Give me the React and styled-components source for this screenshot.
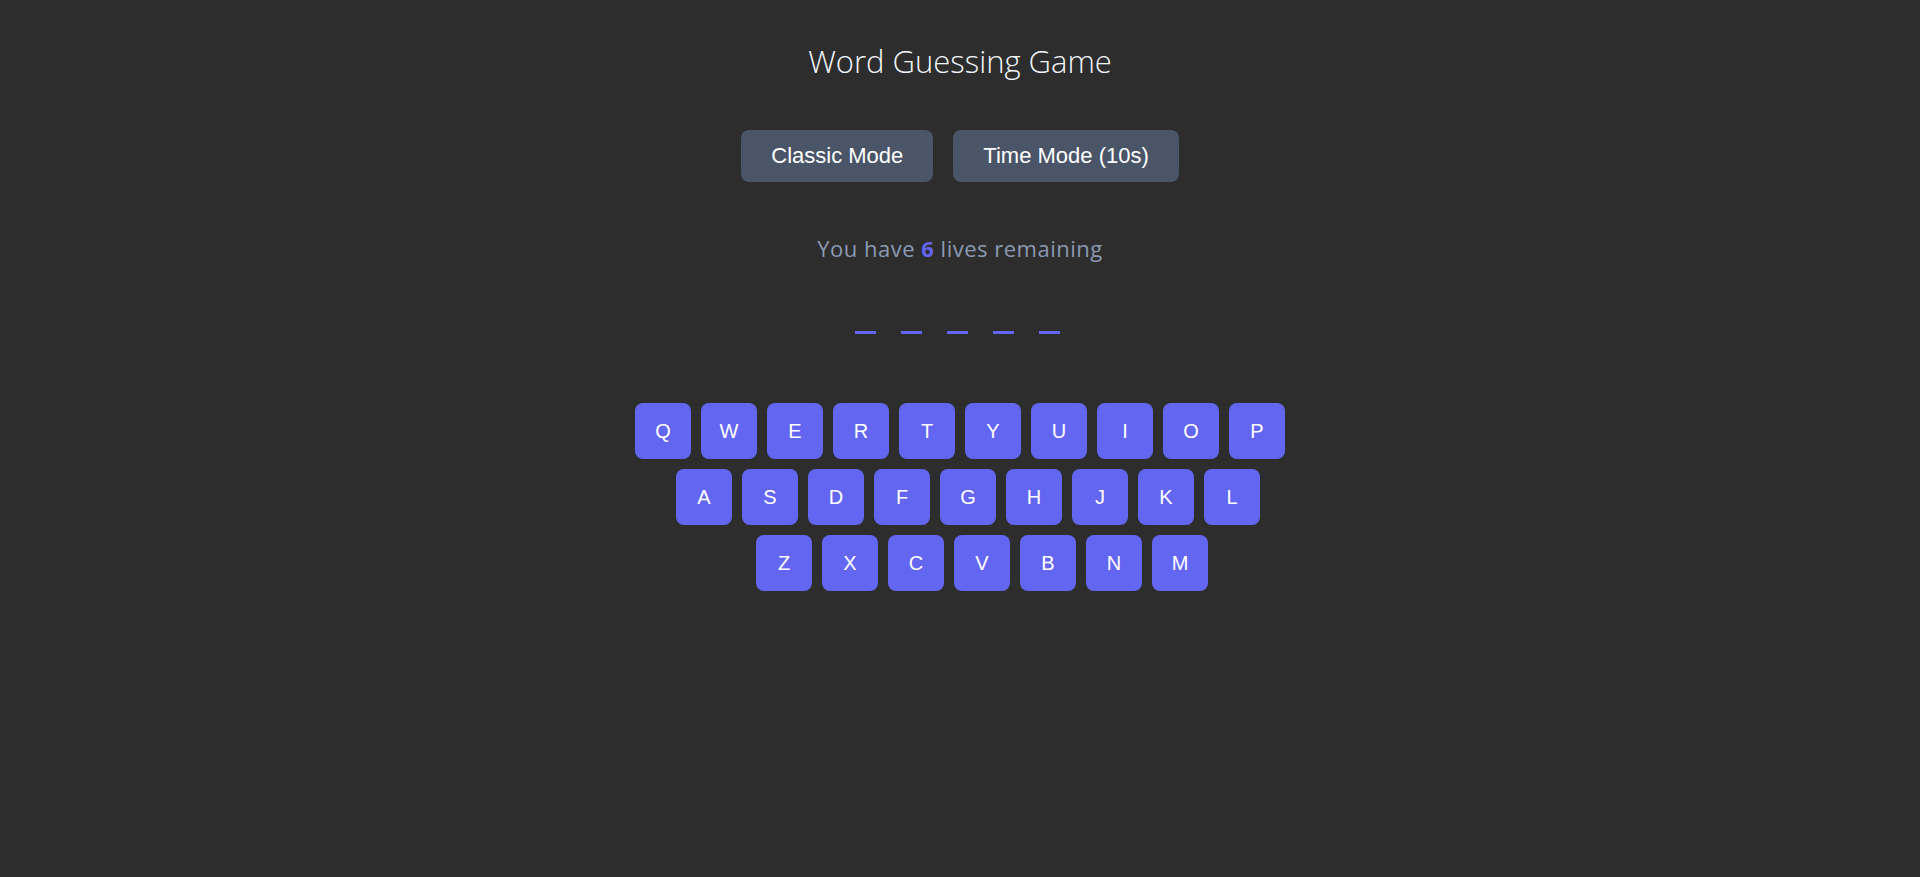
import React from 'react'
import styled, { createGlobalStyle } from 'styled-components'

const GlobalStyle = createGlobalStyle`
  body {
    margin: 0;
    background: #2d2d2d;
  }
`

const Page = styled.div`
  min-height: 100vh;
  background: #2d2d2d;
  display: flex;
  flex-direction: column;
  align-items: center;
  padding-top: 41px;
  box-sizing: border-box;
`

const Title = styled.h1`
  margin: 0;
  font-family: 'Open Sans', 'Noto Sans', sans-serif;
  font-weight: 300;
  font-size: 31px;
  line-height: 40px;
  color: #f1f5f9;
`

const ModeBar = styled.div`
  display: flex;
  gap: 20px;
  margin-top: 49px;
`

const ModeButton = styled.button`
  height: 52px;
  padding: 0 30px;
  border: none;
  border-radius: 8px;
  background: #4a5568;
  color: #ffffff;
  font-family: 'Liberation Sans', Arial, sans-serif;
  font-size: 22px;
  cursor: pointer;
`

const Lives = styled.p`
  margin: 52px 0 0;
  font-family: 'Open Sans', 'Noto Sans', sans-serif;
  font-size: 22px;
  letter-spacing: 0.5px;
  line-height: 28px;
  color: #8b9ab3;
`

const Count = styled.span`
  color: #6366f1;
  font-weight: 700;
`

const Word = styled.div`
  display: flex;
  gap: 25px;
  margin-top: 69px;
  padding-right: 5px;
`

const Blank = styled.span`
  width: 21px;
  height: 3px;
  background: #6366f1;
`

const Keyboard = styled.div`
  display: flex;
  flex-direction: column;
  align-items: center;
  gap: 10px;
  margin-top: 69px;
`

const KeyRow = styled.div`
  display: flex;
  gap: 10px;
  padding-left: ${(p) => p.$indent}px;
`

const Key = styled.button`
  width: 56px;
  height: 56px;
  padding: 0;
  border: none;
  border-radius: 8px;
  background: #6366f1;
  color: #ffffff;
  font-family: 'Liberation Sans', Arial, sans-serif;
  font-size: 20px;
  cursor: pointer;
`

const rows = [
  { keys: 'QWERTYUIOP', indent: 0 },
  { keys: 'ASDFGHJKL', indent: 16 },
  { keys: 'ZXCVBNM', indent: 44 },
]

export default function App() {
  return (
    <>
      <GlobalStyle />
      <Page>
        <Title>Word Guessing Game</Title>
        <ModeBar>
          <ModeButton>Classic Mode</ModeButton>
          <ModeButton>Time Mode (10s)</ModeButton>
        </ModeBar>
        <Lives>
          You have <Count>6</Count> lives remaining
        </Lives>
        <Word>
          {[0, 1, 2, 3, 4].map((i) => (
            <Blank key={i} />
          ))}
        </Word>
        <Keyboard>
          {rows.map((row) => (
            <KeyRow key={row.keys} $indent={row.indent}>
              {row.keys.split('').map((letter) => (
                <Key key={letter}>{letter}</Key>
              ))}
            </KeyRow>
          ))}
        </Keyboard>
      </Page>
    </>
  )
}
